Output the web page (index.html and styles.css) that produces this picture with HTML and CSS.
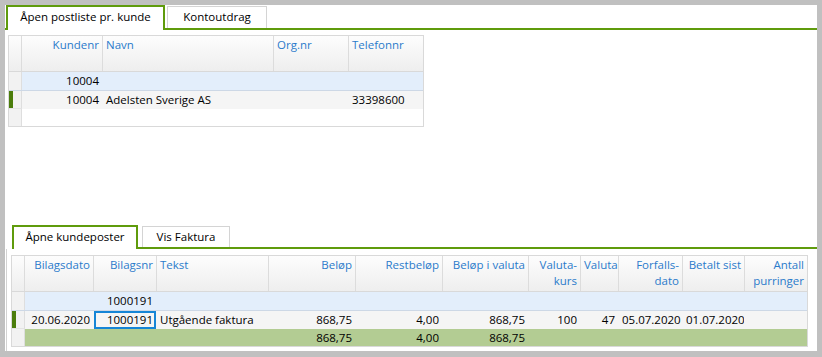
FILE: index.html
```html
<!DOCTYPE html>
<html lang="nb">
<head>
  <meta charset="UTF-8">
  <title>Åpen postliste pr. kunde</title>
  <link rel="stylesheet" href="styles.css">
</head>
<body>
  <div class="window">
    <div class="panel panel-top">
      <div class="tabs">
        <div class="tab active tab-postliste">Åpen postliste pr. kunde</div>
        <div class="tab tab-konto">Kontoutdrag</div>
      </div>
      <div class="tab-body">
        <div class="grid grid-kunde">
          <div class="row head">
            <div class="cell ind"></div>
            <div class="cell num">Kundenr</div>
            <div class="cell">Navn</div>
            <div class="cell">Org.nr</div>
            <div class="cell last">Telefonnr</div>
          </div>
          <div class="row filter">
            <div class="cell ind"></div>
            <div class="cell num">10004</div>
            <div class="cell"></div>
            <div class="cell"></div>
            <div class="cell last"></div>
          </div>
          <div class="row data current">
            <div class="cell ind"><span class="marker"></span></div>
            <div class="cell num">10004</div>
            <div class="cell">Adelsten Sverige AS</div>
            <div class="cell"></div>
            <div class="cell last">33398600</div>
          </div>
          <div class="row empty">
            <div class="cell ind"></div>
            <div class="cell"></div>
            <div class="cell"></div>
            <div class="cell"></div>
            <div class="cell last"></div>
          </div>
        </div>
      </div>
    </div>

    <div class="panel panel-bottom">
      <div class="tabs">
        <div class="tab active tab-poster">Åpne kundeposter</div>
        <div class="tab tab-faktura">Vis Faktura</div>
      </div>
      <div class="tab-body">
        <div class="grid grid-poster">
          <div class="row head">
            <div class="cell ind"></div>
            <div class="cell num">Bilagsdato</div>
            <div class="cell num">Bilagsnr</div>
            <div class="cell">Tekst</div>
            <div class="cell num">Beløp</div>
            <div class="cell num">Restbeløp</div>
            <div class="cell num">Beløp i valuta</div>
            <div class="cell num">Valuta-<br>kurs</div>
            <div class="cell num">Valuta</div>
            <div class="cell num">Forfalls-<br>dato</div>
            <div class="cell num">Betalt sist</div>
            <div class="cell num last">Antall<br>purringer</div>
          </div>
          <div class="row filter">
            <div class="cell ind"></div>
            <div class="cell num"></div>
            <div class="cell num">1000191</div>
            <div class="cell"></div>
            <div class="cell num"></div>
            <div class="cell num"></div>
            <div class="cell num"></div>
            <div class="cell num"></div>
            <div class="cell num"></div>
            <div class="cell num"></div>
            <div class="cell num"></div>
            <div class="cell num last"></div>
          </div>
          <div class="row data current">
            <div class="cell ind"><span class="marker"></span></div>
            <div class="cell num">20.06.2020</div>
            <div class="cell num focused">1000191</div>
            <div class="cell">Utgående faktura</div>
            <div class="cell num">868,75</div>
            <div class="cell num">4,00</div>
            <div class="cell num">868,75</div>
            <div class="cell num">100</div>
            <div class="cell num">47</div>
            <div class="cell num">05.07.2020</div>
            <div class="cell num">01.07.2020</div>
            <div class="cell num last"></div>
          </div>
          <div class="row summary">
            <div class="cell ind"></div>
            <div class="cell num"></div>
            <div class="cell num"></div>
            <div class="cell"></div>
            <div class="cell num">868,75</div>
            <div class="cell num">4,00</div>
            <div class="cell num">868,75</div>
            <div class="cell num"></div>
            <div class="cell num"></div>
            <div class="cell num"></div>
            <div class="cell num"></div>
            <div class="cell num last"></div>
          </div>
        </div>
      </div>
    </div>
  </div>
</body>
</html>
```

FILE: styles.css
```css
body {
  margin: 0;
  background-color: #c0c0c0;
  font-family: "Open Sans", "Noto Sans", sans-serif;
  font-size: 11.5px;
  color: #000;
}

.window {
  margin: 5px 5px 6px 5px;
  height: 346px;
  background-color: #fff;
  display: flex;
  flex-direction: column;
}

.panel-top {
  height: 218px;
}

.panel-bottom {
  flex: 1;
  display: flex;
  flex-direction: column;
  padding: 2px 0 0 1px;
}

/* Faner */
.tabs {
  display: flex;
  align-items: flex-end;
  border-bottom: 2px solid #5f9b0c;
  box-sizing: border-box;
  height: 25px;
  padding-left: 1px;
}

.panel-bottom .tabs {
  height: 24px;
  padding-left: 0;
  margin-left: 6px;
}

.tab {
  box-sizing: border-box;
  height: 22px;
  padding-top: 2px;
  border: 1px solid #d4d4d4;
  border-bottom: none;
  margin-left: 2px;
  line-height: 16px;
  text-align: center;
  white-space: nowrap;
}

.tab.active {
  height: 25px;
  margin-left: 0;
  margin-bottom: -2px;
  border: 2px solid #5f9b0c;
  border-bottom: none;
  background-color: #fff;
}

.panel-bottom .tab {
  height: 21px;
}

.panel-bottom .tab.active {
  height: 24px;
  margin-left: 0;
}

.tab-postliste { width: 159px; }
.tab-konto { width: 100px; }
.tab-poster { width: 126px; }
.tab-faktura { width: 88px; margin-left: 4px; }

.tab-body {
  padding: 5px 0 0 3px;
}

.panel-bottom .tab-body {
  flex: 1;
  border-left: 1px solid #d2d2d2;
  padding: 6px 0 0 4px;
}

/* Rutenett */
.grid {
  display: inline-block;
  border: 1px solid #d9d9d9;
}

.row {
  display: grid;
  height: 18px;
}

.grid-kunde .row {
  grid-template-columns: 13px 81px 171px 75px 74px;
}

.grid-poster .row {
  grid-template-columns: 13px 69px 63px 112px 87px 87px 86px 52px 38px 64px 62px 62px;
}

.cell {
  box-sizing: border-box;
  border-right: 1px solid transparent;
  padding: 0 3px;
  line-height: 17px;
  white-space: nowrap;
  overflow: hidden;
}

.cell.last {
  border-right: none;
}

.cell.num {
  text-align: right;
}

.cell.ind {
  position: relative;
  background-color: #f2f2f2;
  border-right-color: #dedede;
  border-bottom: 1px solid #e4e4e4;
}

.row.head {
  height: 35px;
  border-bottom: 1px solid #d9d9d9;
  background: linear-gradient(#fdfdfd, #eeeeee);
  color: #2b7bcb;
}

.row.head .cell {
  border-right-color: #dcdcdc;
  padding-top: 1px;
  line-height: 16px;
  white-space: normal;
}

.row.head .cell.ind {
  background: none;
  border-bottom: none;
}

.row.filter {
  background-color: #e3eefb;
  border-bottom: 1px solid #cdd8e6;
}

.row.filter .cell.ind {
  border-bottom: none;
}

.row.data {
  background-color: #f5f5f5;
}

.row.empty {
  height: 17px;
}

.row.empty .cell.ind {
  border-bottom: none;
}

.row.summary {
  height: 17px;
  background-color: #b3cc93;
}

.row.summary .cell.ind {
  border-bottom: none;
}

.marker {
  position: absolute;
  left: 0;
  top: 0;
  bottom: 0;
  width: 4px;
  background-color: #4b7d0c;
}

.cell.focused {
  box-shadow: inset 0 0 0 2px #1685d6;
}
```
